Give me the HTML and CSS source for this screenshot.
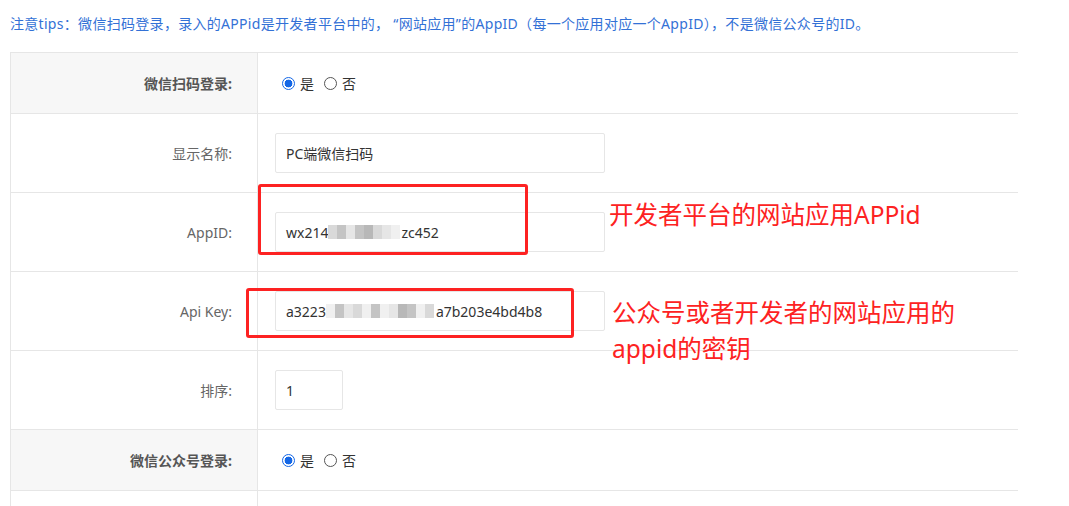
FILE: index.html
```html
<!DOCTYPE html>
<html lang="zh-CN">
<head>
<meta charset="utf-8">
<title>微信登录设置</title>
<link rel="stylesheet" href="styles.css">
</head>
<body>
<div class="page">
  <p class="tips">注意tips：微信扫码登录，录入的APPid是开发者平台中的， “网站应用”的AppID（每一个应用对应一个AppID），不是微信公众号的ID。</p>

  <div class="form">
    <div class="label head">微信扫码登录:</div>
    <div class="field radios">
      <span class="radio on"></span><span class="rtext">是</span>
      <span class="radio"></span><span class="rtext">否</span>
    </div>

    <div class="label">显示名称:</div>
    <div class="field"><div class="input wide">PC端微信扫码</div></div>

    <div class="label">AppID:</div>
    <div class="field"><div class="input wide">wx214<span class="mosaic m1"><i class="g1"></i><i class="g2"></i><i class="g3"></i><i class="g2"></i><i class="g4"></i><i class="g1"></i><i class="g3"></i><i class="g5"></i></span>zc452</div></div>

    <div class="label">Api Key:</div>
    <div class="field"><div class="input wide">a3223<span class="mosaic m2"><i class="g5"></i><i class="g2"></i><i class="g3"></i><i class="g1"></i><i class="g5"></i><i class="g2"></i><i class="g5"></i><i class="g3"></i><i class="g4"></i><i class="g2"></i><i class="g5"></i><i class="g1"></i></span>a7b203e4bd4b8</div></div>

    <div class="label">排序:</div>
    <div class="field"><div class="input short">1</div></div>

    <div class="label head">微信公众号登录:</div>
    <div class="field radios">
      <span class="radio on"></span><span class="rtext">是</span>
      <span class="radio"></span><span class="rtext">否</span>
    </div>

    <div class="label tail"></div>
    <div class="field tail"></div>
  </div>

  <div class="mark box1"></div>
  <div class="mark box2"></div>
  <div class="note note1">开发者平台的网站应用APPid</div>
  <div class="note note2">公众号或者开发者的网站应用的<br>appid的密钥</div>
</div>
</body>
</html>
```

FILE: styles.css
```css
* { box-sizing: border-box; }
html, body { margin: 0; padding: 0; background: #fff; }
body {
  font-family: "Noto Sans", "Noto Sans CJK SC", sans-serif;
  font-size: 14px;
  color: #333;
  overflow: hidden;
}
.page { position: relative; width: 1069px; }

.tips {
  margin: 0;
  padding: 12px 10px 16px 10px;
  line-height: 24px;
  color: #3371d6;
  font-size: 14px;
  letter-spacing: 0.3px;
  white-space: nowrap;
}

.form {
  margin-left: 10px;
  width: 1008px;
  display: grid;
  grid-template-columns: 247px 1fr;
  border-top: 1px solid #e6e6e6;
  border-left: 1px solid #e6e6e6;
}
.label {
  display: flex;
  align-items: center;
  justify-content: flex-end;
  padding-right: 25px;
  height: 79px;
  border-right: 1px solid #e6e6e6;
  border-bottom: 1px solid #e6e6e6;
  color: #666;
}
.label.head {
  height: 61px;
  background: #f7f7f7;
  font-weight: bold;
  color: #555;
}
.field {
  display: flex;
  align-items: center;
  padding-left: 17px;
  height: 79px;
  border-bottom: 1px solid #e6e6e6;
}
.field.radios { height: 61px; padding-left: 24px; }
.label.tail, .field.tail { height: 40px; border-bottom: none; }

.input {
  height: 40px;
  border: 1px solid #e6e6e6;
  border-radius: 2px;
  padding-left: 10px;
  display: flex;
  align-items: center;
  color: #333;
  white-space: nowrap;
}
.input.wide { width: 330px; }
.input.short { width: 68px; }

.mosaic { display: inline-flex; height: 14px; }
.mosaic i { display: block; width: 9px; height: 100%; }
.mosaic.m1 { width: 73px; }
.mosaic.m2 { width: 110px; }
.g1 { background: #d9d9d9; }
.g2 { background: #c4c4c4; }
.g3 { background: #e6e6e6; }
.g4 { background: #b8b8b8; }
.g5 { background: #f0f0f0; }

.radio {
  width: 13px;
  height: 13px;
  border-radius: 50%;
  border: 1px solid #555;
  margin-right: 5px;
  background: #fff;
}
.radio.on {
  border-color: #1467e6;
  background: radial-gradient(circle, #1467e6 0 3.6px, #fff 4.2px);
}
.rtext { margin-right: 10px; color: #333; }

.mark {
  position: absolute;
  border: 3px solid #fd2222;
  border-radius: 3px;
}
.box1 { left: 258px; top: 184px; width: 270px; height: 71px; }
.box2 { left: 246px; top: 288px; width: 328px; height: 50px; }

.note {
  position: absolute;
  color: #fd2222;
  font-size: 24.5px;
  line-height: 36px;
  white-space: nowrap;
}
.note1 { left: 609px; top: 197px; }
.note2 { left: 612px; top: 295px; }
```
